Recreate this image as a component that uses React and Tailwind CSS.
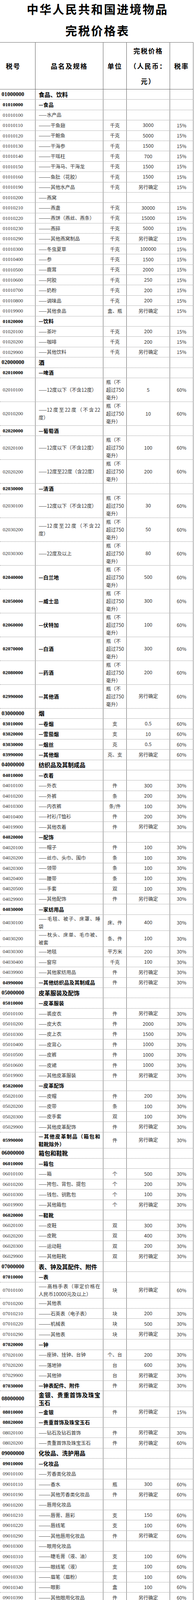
import React from 'react'

const BOTTLE = '瓶（不\n超过750\n毫升）'

// [税号, 品名及规格, 单位, 完税价格, 税率]
const rows = [
  ['01000000', '食品、饮料'],
  ['01010000', '—食品'],
  ['01010100', '——水产品'],
  ['01010110', '———干鱼翅', '千克', '3000', '15%'],
  ['01010120', '———干鲍鱼', '千克', '5000', '15%'],
  ['01010130', '———干海参', '千克', '1500', '15%'],
  ['01010140', '———干瑶柱', '千克', '700', '15%'],
  ['01010150', '———干海马、干海龙', '千克', '1500', '15%'],
  ['01010160', '———鱼肚（花胶）', '千克', '1500', '15%'],
  ['01010190', '———其他水产品', '千克', '另行确定', '15%'],
  ['01010200', '——燕窝'],
  ['01010210', '———燕盏', '千克', '30000', '15%'],
  ['01010220', '———燕饼（燕丝、燕条）', '千克', '15000', '15%'],
  ['01010230', '———燕碎', '千克', '5000', '15%'],
  ['01010290', '———其他燕窝制品', '千克', '另行确定', '15%'],
  ['01010300', '——冬虫夏草', '千克', '100000', '15%'],
  ['01010400', '——参', '千克', '1500', '15%'],
  ['01010500', '——鹿茸', '千克', '2000', '15%'],
  ['01010600', '——阿胶', '千克', '250', '15%'],
  ['01010700', '——奶粉', '千克', '200', '15%'],
  ['01010800', '——调味品', '千克', '200', '15%'],
  ['01019900', '——其他食品', '盒、瓶', '另行确定', '15%'],
  ['01020000', '—饮料'],
  ['01020100', '——茶叶', '千克', '200', '15%'],
  ['01020200', '——咖啡', '千克', '200', '15%'],
  ['01029900', '——其他饮料', '千克', '另行确定', '15%'],
  ['02000000', '酒'],
  ['02010000', '—啤酒'],
  ['02010100', '——12度以下（不含12度）', BOTTLE, '5', '60%'],
  ['02010200', '——12度至22度（不含22\n度）', BOTTLE, '10', '60%'],
  ['02020000', '—葡萄酒'],
  ['02020100', '——12度以下（不含12度）', BOTTLE, '100', '60%'],
  ['02020200', '——12度至22度（含22度）', BOTTLE, '200', '60%'],
  ['02030000', '—清酒'],
  ['02030100', '——12度以下（不含12度）', BOTTLE, '30', '60%'],
  ['02030200', '——12度至22度（不含22\n度）', BOTTLE, '50', '60%'],
  ['02030300', '——22度及以上', BOTTLE, '80', '60%'],
  ['02040000', '—白兰地', BOTTLE, '500', '60%'],
  ['02050000', '—威士忌', BOTTLE, '300', '60%'],
  ['02060000', '—伏特加', BOTTLE, '100', '60%'],
  ['02070000', '—白酒', BOTTLE, '300', '60%'],
  ['02080000', '—药酒', BOTTLE, '200', '60%'],
  ['02990000', '—其他酒', BOTTLE, '另行确定', '60%'],
  ['03000000', '烟'],
  ['03010000', '—卷烟', '支', '0.5', '60%'],
  ['03020000', '—雪茄烟', '支', '10', '60%'],
  ['03030000', '—烟丝', '克', '0.5', '60%'],
  ['03990000', '—其他烟', '克、支', '另行确定', '60%'],
  ['04000000', '纺织品及其制成品'],
  ['04010000', '—衣着'],
  ['04010100', '——外衣', '件', '300', '30%'],
  ['04010200', '——外裤', '条', '200', '30%'],
  ['04010300', '——内衣裤', '条/件', '100', '30%'],
  ['04010400', '——衬衫/T恤衫', '件', '200', '30%'],
  ['04019900', '——其他衣着', '件', '另行确定', '30%'],
  ['04020000', '—配饰'],
  ['04020100', '——帽子', '件', '100', '30%'],
  ['04020200', '——丝巾、头巾、围巾', '条', '100', '30%'],
  ['04020300', '——领带', '条', '100', '30%'],
  ['04020400', '——腰带', '条', '100', '30%'],
  ['04020500', '——手套', '双', '100', '30%'],
  ['04029900', '——其他配饰', '件', '另行确定', '30%'],
  ['04030000', '—家纺用品'],
  ['04030100', '——毛毯、被子、床罩、睡\n袋', '床、件', '400', '30%'],
  ['04030200', '——枕头、床单、毛巾被、\n被套', '条、件', '100', '30%'],
  ['04030300', '——地毯', '平方米', '200', '30%'],
  ['04030400', '——窗帘', '千克', '100', '30%'],
  ['04039900', '——其他家纺用品', '件', '另行确定', '30%'],
  ['04990000', '—其他纺织品及其制成品', '件', '另行确定', '30%'],
  ['05000000', '皮革服装及配饰'],
  ['05010000', '—皮革服装'],
  ['05010100', '——裘皮衣', '件', '另行确定', '30%'],
  ['05010200', '——皮大衣', '件', '2000', '30%'],
  ['05010300', '——皮上衣', '件', '1500', '30%'],
  ['05010400', '——皮背心', '件', '1000', '30%'],
  ['05010500', '——皮裤', '件', '1000', '30%'],
  ['05010600', '——皮裙', '件', '1000', '30%'],
  ['05019900', '——其他皮革服装', '件', '另行确定', '30%'],
  ['05020000', '—皮革配饰'],
  ['05020100', '——皮帽', '件', '200', '30%'],
  ['05020200', '——皮带', '条', '100', '30%'],
  ['05020300', '——皮手套', '双', '100', '30%'],
  ['05029900', '——其他皮革配饰', '件', '另行确定', '30%'],
  ['05990000', '—其他皮革制品（箱包和\n鞋靴除外）', '件', '另行确定', '30%'],
  ['06000000', '箱包和鞋靴'],
  ['06010000', '—箱包'],
  ['06010100', '——箱', '个', '500', '30%'],
  ['06010200', '——挎包、背包、提包', '个', '200', '30%'],
  ['06010300', '——钱包、钥匙包', '个', '100', '30%'],
  ['06019900', '——其他箱包', '个', '另行确定', '30%'],
  ['06020000', '—鞋靴'],
  ['06020100', '——皮鞋', '双', '300', '30%'],
  ['06020200', '——皮靴', '双', '400', '30%'],
  ['06020300', '——运动鞋', '双', '200', '30%'],
  ['06029900', '——其他鞋靴', '双', '另行确定', '30%'],
  ['07000000', '表、钟及其配件、附件'],
  ['07010000', '—表'],
  ['07010100', '——高档手表（审定价格在\n人民币10000元及以上）', '块', '另行确定', '60%'],
  ['07010200', '——其他表'],
  ['07010210', '———石英表（电子表）', '块', '200', '30%'],
  ['07010220', '———机械表', '块', '500', '30%'],
  ['07010290', '———其他表', '块', '另行确定', '30%'],
  ['07020000', '—钟'],
  ['07020100', '——座钟、挂钟、台钟', '个、台', '200', '30%'],
  ['07020200', '——落地钟', '台', '600', '30%'],
  ['07029900', '——其他钟', '台', '另行确定', '30%'],
  ['07030000', '—钟表配件、附件', '件', '另行确定', '30%'],
  ['08000000', '金银、贵重首饰及珠宝\n玉石'],
  ['08010000', '—金银', '件', '另行确定', '15%'],
  ['08020000', '—贵重首饰及珠宝玉石'],
  ['08020100', '——钻石及钻石首饰', '件', '另行确定', '30%'],
  ['08020200', '——贵重首饰及珠宝玉石', '件', '另行确定', '60%'],
  ['09000000', '化妆品、洗护用品'],
  ['09010000', '—化妆品'],
  ['09010100', '——芳香类化妆品'],
  ['09010110', '———香水', '瓶', '300', '60%'],
  ['09010190', '———其他芳香类化妆品', '件', '另行确定', '60%'],
  ['09010200', '——唇用化妆品'],
  ['09010210', '———唇膏、唇彩', '支', '150', '60%'],
  ['09010220', '———唇线笔', '支', '100', '60%'],
  ['09010290', '———其他唇用化妆品', '件', '另行确定', '60%'],
  ['09010300', '——眼用化妆品'],
  ['09010310', '———睫毛膏（液、油）', '支', '100', '60%'],
  ['09010320', '———眼线笔（液）', '支', '100', '60%'],
  ['09010330', '———眉笔（眉粉）', '支', '100', '60%'],
  ['09010340', '———眼影', '盒', '100', '60%'],
  ['09010390', '———其他眼用化妆品', '件', '另行确定', '60%'],
  ['09010400', '——指（趾）甲化妆品'],
  ['09010410', '———洗甲（趾）液', '支', '50', '60%'],
  ['09010420', '———指（趾）甲油', '支', '20', '60%'],
  ['09010490', '———其他指（趾）甲化妆\n品', '件', '另行确定', '60%'],
  ['09010500', '——粉状化妆品'],
  ['09010510', '———粉底及粉底液', '盒、支', '200', '60%'],
  ['09010520', '———粉饼', '盒', '150', '60%'],
  ['09010530', '———扑面粉', '盒', '150', '60%'],
  ['09010540', '———胭脂（粉）、腮红\n（粉）', '盒、支', '100', '60%'],
  ['09010590', '———其他粉状化妆品', '件', '另行确定', '60%'],
  ['09010600', '——特殊功能类化妆品', '件', '另行确定', '60%'],
  ['09020000', '—洗护用品'],
  ['09020100', '——清洁用品'],
  ['09020110', '———洗面奶、洁面霜', '支、瓶', '100', '30%'],
  ['09020120', '———卸妆水', '支、瓶', '150', '30%'],
  ['09020190', '———其他清洁用品', '支、瓶', '另行确定', '30%'],
  ['09020200', '——护肤用品'],
  ['09020210', '———化妆水', '支、瓶', '150', '30%'],
  ['09020220', '———眼霜', '支、瓶', '200', '30%'],
  ['09020230', '———面霜及乳液', '支、瓶', '200', '30%'],
  ['09020240', '———精华液（素）', '支、瓶', '300', '30%'],
  ['09020250', '———防晒霜（露、乳液）', '支', '150', '30%'],
  ['09020260', '———面膜', '张、瓶', '20', '30%'],
  ['09020270', '———润唇膏', '支', '20', '30%'],
  ['09020280', '———护手霜', '支、瓶', '50', '30%'],
  ['09020290', '———其他护肤用品', '支、瓶', '另行确定', '30%'],
  ['09020300', '——护发用品'],
  ['09020310', '———洗/护发液', '支、瓶', '30', '30%'],
  ['09020390', '———其他护发用品', '支、瓶', '另行确定', '30%'],
]

const cjk = "font-['Noto_Sans_CJK_SC',sans-serif]"

const heights = {
  1: 'h-[26.4px]',
  2: 'h-[41px]',
  3: 'h-[61px]',
}

const Name = ({ text }) => {
  const lines = text.split('\n')
  if (lines.length === 1) return <span className="whitespace-nowrap">{text}</span>
  return (
    <span className="block w-full">
      {lines.map((l, i) => (
        <span
          key={i}
          className={
            i < lines.length - 1
              ? 'block whitespace-nowrap text-justify [text-align-last:justify]'
              : 'block whitespace-nowrap'
          }
        >
          {l}
        </span>
      ))}
    </span>
  )
}

const Row = ({ code, name, unit, price, rate }) => {
  const level = code.slice(2) === '000000' ? 1 : code.slice(4) === '0000' ? 2 : 3
  const unitLines = unit ? unit.split('\n') : []
  const lines = Math.max(name.split('\n').length, unitLines.length || 1)
  return (
    <div className={'flex border-b border-dotted border-[#7a7a7a] ' + heights[lines]}>
      <div
        className={
          "flex w-[91px] shrink-0 items-center border-r border-[#5a5a5a] font-['Liberation_Serif',serif] " +
          (level === 1
            ? 'pl-[4px] text-[14.5px] font-bold text-black'
            : level === 2
            ? 'pl-[7px] text-[13px] font-bold text-black'
            : 'pl-[7px] text-[13px] text-[#333]')
        }
      >
        {code}
      </div>
      <div
        className={
          'flex w-[174px] shrink-0 items-center border-r border-[#5a5a5a] pl-[8px] pr-[7px] leading-[20px] ' +
          cjk +
          ' ' +
          (level === 1
            ? 'text-[15px] font-bold text-black'
            : level === 2
            ? 'text-[13px] font-bold tracking-[0.3px] text-black'
            : 'text-[12.5px] text-[#333]')
        }
      >
        <Name text={name} />
      </div>
      <div
        className={
          'flex w-[60px] shrink-0 items-center border-r border-[#5a5a5a] text-[12.5px] leading-[20px] text-[#333] ' +
          cjk +
          (unitLines.length > 1 ? ' justify-start pl-[7px]' : ' justify-center')
        }
      >
        {unitLines.length > 1 ? (
          <span className="flex flex-col">
            {unitLines.map((l, i) => (
              <span key={i} className="whitespace-nowrap">
                {l}
              </span>
            ))}
          </span>
        ) : (
          <span className="whitespace-nowrap">{unit}</span>
        )}
      </div>
      <div className={'flex w-[111px] shrink-0 items-center justify-center border-r border-[#5a5a5a] text-[12.5px] text-[#333] ' + cjk}>
        {price}
      </div>
      <div className={'flex w-[60px] shrink-0 items-center justify-center border-r border-[#5a5a5a] text-[12px] text-[#333] ' + cjk}>
        {rate}
      </div>
    </div>
  )
}

const App = () => {
  return (
    <div className="w-[500px] bg-white">
      <div className={'text-center text-[30px] font-bold tracking-[3px] text-black ' + cjk}>
        <div className="leading-[45px]">中华人民共和国进境物品</div>
        <div className="mt-[10px] leading-[45px]">完税价格表</div>
      </div>
      <div className="mt-[8px] w-[496px]">
        <div className={'flex h-[121px] border-t border-b border-[#6a6a6a] text-[17px] font-bold leading-[39px] tracking-[2px] text-black ' + cjk}>
          <div className="flex w-[91px] shrink-0 items-center border-r border-[#5a5a5a] pl-[15px]">税号</div>
          <div className="flex w-[174px] shrink-0 items-center justify-center border-r border-[#5a5a5a]">品名及规格</div>
          <div className="flex w-[60px] shrink-0 items-center justify-center border-r border-[#5a5a5a]">单位</div>
          <div className="flex w-[111px] shrink-0 flex-col items-center justify-center border-r border-[#5a5a5a]">
            <span className="whitespace-nowrap">完税价格</span>
            <span className="whitespace-nowrap">（人民币：</span>
            <span className="whitespace-nowrap">元）</span>
          </div>
          <div className="flex w-[60px] shrink-0 items-center justify-center border-r border-[#5a5a5a]">税率</div>
        </div>
        {rows.map(([code, name, unit, price, rate]) => (
          <Row key={code} code={code} name={name} unit={unit} price={price} rate={rate} />
        ))}
      </div>
    </div>
  )
}

export default App
